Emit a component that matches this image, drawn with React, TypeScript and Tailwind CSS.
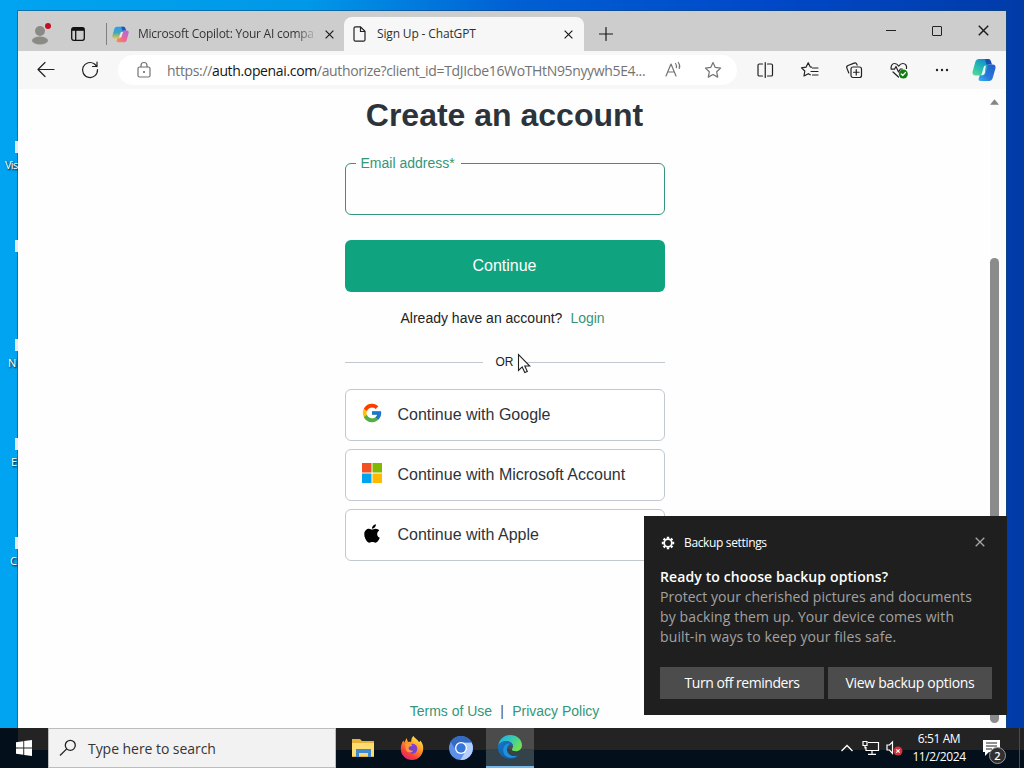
import type { ReactNode } from 'react';
import { FaApple } from 'react-icons/fa';
import { FcGoogle } from 'react-icons/fc';

type DesktopItem = { label: string; top: string; left: string };

const desktopItems: DesktopItem[] = [
  { label: 'Vis', top: 'top-[140px]', left: 'left-[5px]' },
  { label: '', top: 'top-[239px]', left: 'left-[5px]' },
  { label: 'N', top: 'top-[338px]', left: 'left-[8px]' },
  { label: 'E', top: 'top-[437px]', left: 'left-[11px]' },
  { label: 'C', top: 'top-[536px]', left: 'left-[10px]' },
];

function Icon({ size = 20, children }: { size?: number; children: ReactNode }) {
  return (
    <svg
      width={size}
      height={size}
      viewBox={`0 0 ${size} ${size}`}
      fill="none"
      stroke="currentColor"
      strokeWidth="1.2"
      strokeLinecap="round"
      strokeLinejoin="round"
      className="shrink-0"
    >
      {children}
    </svg>
  );
}

function CloseIcon({ size = 9 }: { size?: number }) {
  return (
    <svg width={size} height={size} viewBox="0 0 10 10" stroke="currentColor" strokeWidth="1.3" className="shrink-0">
      <path d="M.7.7l8.6 8.6M9.3.7L.7 9.3" />
    </svg>
  );
}

function CopilotColorIcon() {
  return (
    <svg width="17" height="17" viewBox="0 0 24 24" className="shrink-0">
      <defs>
        <linearGradient id="cpBlue" x1="0" y1="0" x2="0" y2="1">
          <stop offset="0" stopColor="#2ba0ec" />
          <stop offset=".5" stopColor="#3fa6c0" />
          <stop offset="1" stopColor="#e8c83e" />
        </linearGradient>
        <linearGradient id="cpPink" x1="1" y1="0" x2="0" y2="1">
          <stop offset="0" stopColor="#a968ee" />
          <stop offset=".5" stopColor="#e9659a" />
          <stop offset="1" stopColor="#f6904d" />
        </linearGradient>
      </defs>
      <path d="M17 23H8.500c-1.500 0-2.300-.8-1.800-2.400L10.500 9c.5-1.600 1.800-2.500 3.300-2.500h6.700c2.500 0 3.500 1.500 2.900 3.900L20.700 20c-.6 2-1.900 3-3.700 3z" fill="url(#cpPink)" />
      <path d="M7 1h8.500c1.500 0 2.300.8 1.800 2.400L13.500 15c-.5 1.600-1.800 2.500-3.300 2.500H3.500C1 17.500 0 16 .6 13.600L3.300 4C3.900 2 5.200 1 7 1z" fill="url(#cpBlue)" />
      <path d="M13 1h3.500c1.500 0 2 1 2.500 2.400l1 3.100h-5.500z" fill="#2453bd" />
      <path d="M12.600 8.500h3l-2.500 7.400h-3.300z" fill="#eee4e8" />
    </svg>
  );
}

function CopilotBlueIcon() {
  return (
    <svg width="24" height="24" viewBox="0 0 24 24" className="shrink-0">
      <defs>
        <linearGradient id="cbLeft" x1=".8" y1="0" x2=".2" y2="1">
          <stop offset="0" stopColor="#1683cd" />
          <stop offset=".5" stopColor="#22b7b5" />
          <stop offset="1" stopColor="#52d896" />
        </linearGradient>
        <linearGradient id="cbRight" x1="1" y1="0" x2="0" y2="1">
          <stop offset="0" stopColor="#205bcc" />
          <stop offset=".6" stopColor="#2878dd" />
          <stop offset="1" stopColor="#38b6ed" />
        </linearGradient>
      </defs>
      <path d="M17 23H8.500c-1.500 0-2.300-.8-1.800-2.400L10.500 9c.5-1.600 1.800-2.500 3.300-2.500h6.700c2.500 0 3.500 1.500 2.900 3.900L20.700 20c-.6 2-1.900 3-3.700 3z" fill="url(#cbRight)" />
      <path d="M7 1h8.500c1.500 0 2.300.8 1.800 2.400L13.500 15c-.5 1.600-1.800 2.500-3.300 2.500H3.500C1 17.500 0 16 .6 13.600L3.300 4C3.900 2 5.200 1 7 1z" fill="url(#cbLeft)" />
      <path d="M13 1h3.500c1.500 0 2 1 2.500 2.400l1 3.100h-5.500z" fill="#1750b4" />
      <path d="M13.800 7.500c-1 0-1.700.5-2 1.500l-2.500 8.300c1.900 0 3-.6 3.500-2.200z" fill="#e8faff" />
    </svg>
  );
}

function TabStrip() {
  return (
    <div className="flex h-10 items-end bg-[#cdcdcd] text-[#1b1b1b]">
      <div className="flex h-[34px] w-11 items-center justify-center">
        <svg width="22" height="24" viewBox="0 0 22 24" className="shrink-0">
          <circle cx="11" cy="9" r="5" fill="#8b8b86" />
          <ellipse cx="11" cy="18.500" rx="8" ry="4" fill="#8b8b86" />
          <circle cx="19" cy="4" r="3" fill="#c50f1f" />
        </svg>
      </div>
      <div className="flex h-[34px] w-8 items-center justify-center">
        <svg width="14" height="14" viewBox="0 0 14 14" fill="none" stroke="#111" strokeWidth="1.300">
          <rect x=".7" y=".7" width="12.600" height="12.600" rx="2" />
          <path d="M1 2.300h12" strokeWidth="3" />
          <path d="M4.700 3v10" />
        </svg>
      </div>
      <div className="ml-3 flex h-[34px] w-[238px] items-center">
        <span className="h-[22px] w-px bg-[#808080]" />
        <span className="ml-[5px] flex">
          <CopilotColorIcon />
        </span>
        <span className="ml-[9px] w-[175px] overflow-hidden whitespace-nowrap bg-gradient-to-r from-[#303030] from-90% to-[#a9a9a9] bg-clip-text text-[12px] tracking-[-0.24px] text-transparent">
          Microsoft Copilot: Your AI compa
        </span>
        <span className="ml-[12px] flex">
          <CloseIcon />
        </span>
      </div>
      <div className="flex h-[34px] w-[240px] items-center rounded-t-lg bg-[#f7f7f7]">
        <svg width="13" height="16" viewBox="0 0 13 16" fill="none" stroke="#222" strokeWidth="1.200" className="ml-[9px] shrink-0">
          <path d="M2.500.8h5l4.500 4.500v8.400c0 .9-.6 1.500-1.500 1.500h-8c-.9 0-1.500-.6-1.500-1.500V2.300C1 1.400 1.600.8 2.500.8zM7.500 1v4.500H12" />
        </svg>
        <span className="ml-[11px] w-[187px] whitespace-nowrap text-[12px] tracking-[-0.15px] text-[#303030]">
          Sign Up - ChatGPT
        </span>
        <CloseIcon />
      </div>
      <div className="flex h-[34px] w-[43px] items-center justify-center">
        <Icon size={14}>
          <path d="M7 .5v13M.5 7h13" />
        </Icon>
      </div>
      <div className="ml-auto mb-[5px] flex h-[31px] items-center">
        <span className="flex w-[46px] justify-center">
          <span className="h-px w-[10px] bg-[#222]" />
        </span>
        <span className="flex w-[46px] justify-center">
          <span className="size-[10px] rounded-[1px] border border-[#222]" />
        </span>
        <span className="flex w-[46px] justify-center">
          <CloseIcon size={11} />
        </span>
      </div>
    </div>
  );
}

function ToolbarCell({ children }: { children: ReactNode }) {
  return <div className="flex w-[44.5px] shrink-0 items-center justify-center">{children}</div>;
}

function Toolbar() {
  return (
    <div className="flex h-[38px] bg-[#f7f7f7] pl-[6px] text-[#222]">
      <div className="flex w-11 items-center justify-center">
        <Icon>
          <path d="M18 9.500H2.300M9 2.500l-7 7 7 7" />
        </Icon>
      </div>
      <div className="flex w-11 items-center justify-center">
        <Icon>
          <path d="M17.500 9.500A7.500 7.500 0 1 1 14.500 4L17 6.500M17 2v4.500h-4.500" />
        </Icon>
      </div>
      <div className="my-1 ml-[6px] mr-[6px] flex w-[619px] items-center rounded-full bg-white text-[#737373]">
        <span className="ml-4 flex">
          <Icon>
            <rect x="4" y="7" width="12" height="10" rx="1.500" />
            <path d="M7 7V5.500a3 3 0 0 1 6 0V7" />
            <circle cx="10" cy="12" r=".5" fill="currentColor" />
          </Icon>
        </span>
        <span className="ml-[13px] w-[495px] whitespace-nowrap text-[14px] tracking-[-0.35px]">
          https://<span className="text-[#151515]">auth.openai.com</span>
          /authorize?client_id=TdJIcbe16WoTHtN95nyywh5E4...
        </span>
        <span className="flex w-8 shrink-0">
          <Icon>
            <path d="M4 16L9 4l5 12M5.900 12h6.200M13.500 3.500q1.500 2 .8 4.200M16.300 2.500q2.300 3 .9 6" />
          </Icon>
        </span>
        <span className="ml-[9px] flex">
          <Icon>
            <path d="M10 2.500l2.300 4.900 5.300.7-3.900 3.700 1 5.300-4.700-2.600-4.700 2.600 1-5.300L2.400 8.100l5.300-.7z" />
          </Icon>
        </span>
      </div>
      <ToolbarCell>
        <Icon>
          <path d="M7.500 4H4.300C3.500 4 3 4.500 3 5.300v9.400c0 .8.500 1.300 1.300 1.300h3.200M12.500 4h3.700c.8 0 1.300.5 1.300 1.300v9.400c0 .8-.5 1.300-1.300 1.300h-3.700M10.250 2.500v15" />
        </Icon>
      </ToolbarCell>
      <ToolbarCell>
        <Icon>
          <path d="M11.500 7.200L10.300 7 8.200 2.700 6 7.200l-4.500.7L4.800 11 4 16l4.300-2.300M8.300 13.700l2 1.100M12.500 8H18M11 11.500h7M12.500 15H18" />
        </Icon>
      </ToolbarCell>
      <ToolbarCell>
        <Icon>
          <rect x="7" y="7" width="10.500" height="10.500" rx="2" />
          <path d="M12.250 9.500v5.500M9.500 12.250H15M4.800 13L2.900 8.100A2 2 0 0 1 4 5.500l6.200-2.400a2 2 0 0 1 2.600 1.100l.3.900" />
        </Icon>
      </ToolbarCell>
      <ToolbarCell>
        <Icon>
          <path d="M2.200 9.200C1.500 6.200 3 3.500 5.600 3.500c2 0 3.100 1.200 4.100 2.600 1-1.400 2.100-2.600 4.100-2.600 2.600 0 4.200 2.200 3.700 5M2.200 9.200h3.300l1.500-2.700L9.500 12l1.800-3h2M4 12l5.500 5" />
          <circle cx="14.300" cy="14" r="4.500" fill="#107c10" stroke="none" />
          <path d="M12.200 14l1.500 1.500 2.800-3" stroke="white" />
        </Icon>
      </ToolbarCell>
      <ToolbarCell>
        <Icon>
          <g fill="currentColor" stroke="none">
            <circle cx="4" cy="10" r="1.200" />
            <circle cx="9" cy="10" r="1.200" />
            <circle cx="14" cy="10" r="1.200" />
          </g>
        </Icon>
      </ToolbarCell>
      <div className="flex w-[37px] items-center justify-center">
        <CopilotBlueIcon />
      </div>
    </div>
  );
}

function MicrosoftLogo() {
  return (
    <svg width="20" height="20" viewBox="0 0 20 20" className="mb-px">
      <path fill="#f25022" d="M0 0h9.500v9.500H0z" />
      <path fill="#7fba00" d="M10.500 0H20v9.500h-9.500z" />
      <path fill="#00a4ef" d="M0 10.500h9.500V20H0z" />
      <path fill="#ffb900" d="M10.500 10.500H20V20h-9.500z" />
    </svg>
  );
}

function ProviderButton({ icon, label }: { icon: ReactNode; label: string }) {
  return (
    <button
      type="button"
      className="flex h-[52px] w-full items-center rounded-md border border-[#c2c8d0] bg-white px-4 text-base text-[#2d333a]"
    >
      <span className="mb-1 flex w-5 shrink-0 justify-center">{icon}</span>
      <span className="ml-4 whitespace-nowrap">{label}</span>
    </button>
  );
}

function SignUpPage() {
  return (
    <div className="flex flex-1 justify-end bg-[#fefefe]">
      <main className="flex flex-1 flex-col items-center font-['Liberation_Sans',Arial,sans-serif] text-sm">
        <h1 className="mt-[6px] h-10 whitespace-nowrap text-[32px] font-bold leading-10 text-[#2d333a]">
          Create an account
        </h1>
        <div className="relative mt-[28px] h-[52px] w-[320px] rounded-md border border-[#33967a]">
          <label className="absolute -top-[10px] left-[10px] w-[105px] whitespace-nowrap bg-[#fefefe] px-[5px] leading-[18px] text-[#33967a]">
            Email address*
          </label>
        </div>
        <button type="button" className="mt-[25px] h-[52px] w-[320px] rounded-md bg-[#10a37f] text-base text-white">
          Continue
        </button>
        <p className="mt-4 w-[320px] pl-[56px] leading-5 text-[#222]">
          Already have an account?<a className="ml-2 text-[#33967a]">Login</a>
        </p>
        <div className="mt-[24px] flex h-5 w-[320px] items-center text-xs text-[#222]">
          <span className="h-px w-[138px] bg-[#c2c8d0]" />
          <span className="w-[44px] text-center">OR</span>
          <span className="h-px w-[138px] bg-[#c2c8d0]" />
        </div>
        <div className="mt-[17px] flex w-[320px] flex-col gap-2">
          <ProviderButton icon={<FcGoogle size={22} className="shrink-0" />} label="Continue with Google" />
          <ProviderButton icon={<MicrosoftLogo />} label="Continue with Microsoft Account" />
          <ProviderButton icon={<FaApple size={21} className="text-black" />} label="Continue with Apple" />
        </div>
        <footer className="mt-[140px] flex whitespace-nowrap leading-5 text-[#33967a]">
          <a>Terms of Use</a>
          <span className="w-5 text-center text-[#555]">|</span>
          <a>Privacy Policy</a>
        </footer>
      </main>
      <div className="flex w-[15px] flex-col items-start bg-[#fcfcfc] pt-[10px]">
        <svg width="9" height="6" viewBox="0 0 10 6" className="-ml-px shrink-0">
          <path d="M5 0l5 6H0z" fill="#858585" />
        </svg>
        <span className="-ml-px mt-[153px] h-[465px] w-[9px] rounded-full bg-[#8b8b8b]" />
      </div>
    </div>
  );
}

function BackupToast() {
  return (
    <div className="absolute left-[644px] top-[516px] flex h-[199px] w-[363px] flex-col bg-[#1f1f1f] pl-4 pr-[15px] text-white">
      <div className="mt-[17px] flex h-5 items-center">
        <svg width="16" height="16" viewBox="0 0 16 16" fill="none" stroke="white">
          <circle cx="8" cy="8" r="3.800" strokeWidth="1.700" />
          <g strokeWidth="2.400">
            <path d="M8 1.800v2M8 12.200v2M1.800 8h2M12.200 8h2M3.600 3.600l1.400 1.400M11 11l1.400 1.400M12.400 3.600l-1.400 1.400M5 11l-1.400 1.400" />
          </g>
        </svg>
        <span className="ml-2 whitespace-nowrap text-[12px] tracking-[-0.35px]">Backup settings</span>
        <span className="mb-[2px] ml-auto mr-[7px] flex text-[#a8a8a8]">
          <CloseIcon size={10} />
        </span>
      </div>
      <div className="mt-[14px] whitespace-nowrap text-[14px] leading-5 text-[#a2a2a2]">
        <p className="font-semibold tracking-[0.12px] text-white">Ready to choose backup options?</p>
        <p className="tracking-[0.04px]">Protect your cherished pictures and documents</p>
        <p className="tracking-[0.12px]">by backing them up. Your device comes with</p>
        <p className="tracking-[0.12px]">built-in ways to keep your files safe.</p>
      </div>
      <div className="mt-5 flex gap-1 text-[14px] tracking-[-0.3px]">
        <button type="button" className="h-8 w-[164px] whitespace-nowrap bg-[#4c4c4c] pb-px tracking-[-0.46px]">
          Turn off reminders
        </button>
        <button type="button" className="h-8 w-[164px] whitespace-nowrap bg-[#4c4c4c] pb-px">
          View backup options
        </button>
      </div>
    </div>
  );
}

function FolderIcon() {
  return (
    <svg width="24" height="24" viewBox="0 0 24 24">
      <path d="M1 3h8l2 2h12v16H1z" fill="#e6b23c" />
      <path d="M1 7h22v13H1z" fill="#ffdc70" />
      <path d="M5 13h15v8h-3v-4H8v4H5z" fill="#4089cf" />
      <path d="M8 17h9v3H8z" fill="#f2d77d" />
    </svg>
  );
}

function FirefoxIcon() {
  return (
    <svg width="24" height="24" viewBox="0 0 24 24">
      <defs>
        <linearGradient id="fox" x1=".8" y1="0" x2=".2" y2="1">
          <stop offset="0" stopColor="#fff04c" />
          <stop offset=".4" stopColor="#ff9b25" />
          <stop offset=".75" stopColor="#f83c3d" />
          <stop offset="1" stopColor="#df2280" />
        </linearGradient>
      </defs>
      <path d="M13.500 0c1 2 4 3.500 5.500 6 1-.2 1.200-1 1.200-1.500 2 2.200 3.300 5 3 8.500C22.800 19.500 18 24 12 24S.8 19.300.8 13c0-3.500 1-6.200 2.700-8.500l.8 2.200L6.500 2l1.500 4c1-.3 2.200-.3 3.200 0C11 3.500 12 1.200 13.500 0z" fill="url(#fox)" />
      <circle cx="12.300" cy="12.700" r="5" fill="#7b40cf" />
      <path d="M5.500 8c2-1.500 5-1 7 1.200-1.200 1.300-3.200.9-3.800 2.400-.5 2 1.500 3.800 4.500 2.800C11.500 18 6 17 5.500 12z" fill="#ff9a34" />
    </svg>
  );
}

function ChromiumIcon() {
  return (
    <svg width="24" height="24" viewBox="0 0 24 24">
      <circle cx="12" cy="12" r="12" fill="#5b91e8" />
      <path d="M12 6.500h10.600A12 12 0 0 1 11.500 24l5.200-9z" fill="#b4cffb" />
      <path d="M1.700 5.800A12 12 0 0 1 22.600 6.500H12A5.500 5.500 0 0 0 7.200 14.700z" fill="#356ac3" />
      <circle cx="12" cy="12" r="6" fill="white" />
      <circle cx="12" cy="12" r="4.700" fill="#3876d8" />
    </svg>
  );
}

function EdgeIcon() {
  return (
    <svg width="24" height="24" viewBox="0 0 24 24">
      <defs>
        <linearGradient id="edgeTop" x1="0" y1="0" x2="1" y2=".5">
          <stop offset="0" stopColor="#29a9e6" />
          <stop offset=".5" stopColor="#31c6bc" />
          <stop offset="1" stopColor="#70df55" />
        </linearGradient>
        <linearGradient id="edgeLow" x1="0" y1="0" x2="1" y2="1">
          <stop offset="0" stopColor="#1678cb" />
          <stop offset="1" stopColor="#124d91" />
        </linearGradient>
      </defs>
      <path d="M.2 10.500C1.200 4.300 6 0 12.200 0 19 0 24 4.800 24 10.300c0 3.700-2.800 6-6 6-2.700 0-4.200-.8-4.200-1.700 0-.7 1.200-1.200 1.200-3.300C15 8.300 12 6 8.500 6 5 6 2 7.500.2 10.500z" fill="url(#edgeTop)" />
      <path d="M0 12C.3 8.500 4 6 8.300 6c4 0 6.700 2.300 6.700 5-2-1.800-6-.2-6 4 0 4.500 5 7.500 10.500 5.700l2-.9C19.500 22.500 16 24 12 24 5 24-.4 18.600 0 12z" fill="url(#edgeLow)" />
      <path d="M5.300 16.500C4.500 11 9 8 12.200 8.700 9.500 10 8.500 12.600 9 15.500c.8 4 5 6.700 10.500 5.200C14 25 6 22.500 5.300 16.500z" fill="#1d91dc" />
    </svg>
  );
}

function Taskbar() {
  return (
    <div className="flex h-10 bg-gradient-to-b from-[#232323] from-55% to-[#03101b] to-55% text-white">
      <div className="flex w-12 items-center justify-center bg-gradient-to-r from-[#03101b] from-37% to-transparent to-37%">
        <svg width="16" height="16" viewBox="0 0 16 16" fill="white">
          <path d="M0 2.200L7.300 1.200v6.400H0zM8.200 1.100L16 0v7.600H8.200zM0 8.400h7.300v6.400L0 13.800zM8.200 8.400H16V16l-7.800-1.100z" />
        </svg>
      </div>
      <div className="flex w-[288px] items-center border border-[#bcbcbc] bg-[#f2f2f2] text-[#353535]">
        <svg width="18" height="18" viewBox="0 0 18 18" fill="none" stroke="#222" strokeWidth="1.300" className="ml-[10px]">
          <circle cx="11.300" cy="6.300" r="5" />
          <path d="M7.700 9.900L1 16.500" />
        </svg>
        <span className="ml-[11px] whitespace-nowrap text-[14px] tracking-[-0.05px]">Type here to search</span>
      </div>
      <div className="ml-[2px] flex">
        <span className="flex w-[49px] items-center justify-center"><FolderIcon /></span>
        <span className="flex w-[49px] items-center justify-center"><FirefoxIcon /></span>
        <span className="flex w-[50px] items-center justify-center"><ChromiumIcon /></span>
        <span className="flex w-12 items-center justify-center border-b-2 border-[#76b9ed] bg-gradient-to-b from-[#4b4b4b] from-55% to-[#344249] to-55%">
          <EdgeIcon />
        </span>
      </div>
      <div className="ml-auto flex items-center">
        <svg width="12" height="8" viewBox="0 0 12 8" fill="none" stroke="white" strokeWidth="1.300">
          <path d="M.5 7L6 1.500 11.500 7" />
        </svg>
        <svg width="18" height="16" viewBox="0 0 18 16" fill="none" stroke="white" strokeWidth="1.200" className="ml-[9px]">
          <path d="M6 2.500h10.500v8H4V7M10 11v3.300M6 14.400h8M1 1.500h4v4H1zM3 5.500v3" />
        </svg>
        <svg width="18" height="16" viewBox="0 0 18 16" fill="none" stroke="white" strokeWidth="1.200" className="ml-[6px]">
          <path d="M6.500 13.500V2L3.500 5H1v5h2.500z" />
          <circle cx="12" cy="11" r="4.500" fill="#d13438" stroke="none" />
          <path d="M10.300 9.300l3.400 3.400M13.700 9.300l-3.400 3.400" />
        </svg>
        <div className="ml-[5px] w-[60px] whitespace-nowrap text-center text-[12px] leading-[18px] tracking-[-0.4px]">
          <p>6:51 AM</p>
          <p>11/2/2024</p>
        </div>
        <div className="relative ml-[14px] mr-[20px] flex size-4 items-center">
          <svg width="17" height="16" viewBox="0 0 17 16" className="shrink-0">
            <path d="M0 0h17v12H6l-4 4v-4H0z" fill="white" />
            <path d="M3 3h11M3 6h11M3 9h6" stroke="#222" />
          </svg>
          <span className="absolute left-[6px] top-[7px] flex size-[17px] items-center justify-center rounded-full border border-[#999] bg-[#303030] text-[11px] font-semibold leading-none">
            2
          </span>
        </div>
        <span className="mr-1 h-10 w-px bg-[#4a4a4a]" />
      </div>
    </div>
  );
}

function DesktopIcons() {
  return (
    <>
      {desktopItems.map((item) => (
        <div key={item.top} className={`absolute ${item.top} left-0 h-9 w-[18px] overflow-hidden`}>
          <span className="absolute left-[15px] top-px h-3 w-[3px] bg-[#e1edf4]" />
          <span className={`absolute top-[17px] ${item.left} whitespace-nowrap text-[11px] leading-[15px] tracking-[-0.7px] text-white [text-shadow:1px_1px_2px_#000]`}>
            {item.label}
          </span>
        </div>
      ))}
    </>
  );
}

export default function App() {
  return (
    <div className="relative flex h-[768px] w-[1024px] flex-col overflow-hidden bg-[linear-gradient(90deg,#00a4f0_0%,#0098e8_30%,#0060d4_50%,#0048c8_75%,#003ba8_100%)] font-['Open_Sans','Noto_Sans',sans-serif]">
      <DesktopIcons />
      <div className="ml-[18px] mt-[11px] flex h-[717px] w-[988px] flex-col overflow-hidden bg-white shadow-[0_0_0_1px_#17457388]">
        <TabStrip />
        <Toolbar />
        <SignUpPage />
      </div>
      <Taskbar />
      <BackupToast />
      <svg width="14" height="21" viewBox="0 0 14 21" className="absolute left-[517px] top-[353px]">
        <path d="M1.500 1.500v16l3.700-3.600 2.600 5.600 2.500-1.100-2.500-5.400h5z" fill="white" stroke="#222" strokeWidth="1.100" />
      </svg>
    </div>
  );
}
